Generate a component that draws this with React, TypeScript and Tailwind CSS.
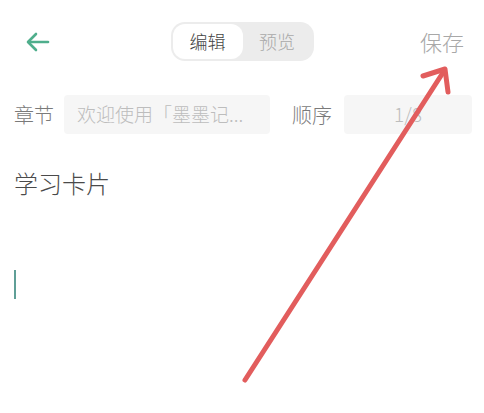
import React from "react";

export default function App() {
  const font = { fontFamily: '"Noto Sans CJK SC", "Noto Sans", sans-serif' };
  return (
    <div className="relative w-[484px] h-[413px] bg-white overflow-hidden font-light" style={font}>
      {/* Header */}
      <div className="grid grid-cols-[1fr_auto_1fr] items-center h-[83px]">
        <div className="pl-[25px] flex items-center">
          <svg width="26" height="24" viewBox="0 0 26 24" fill="none" stroke="#4fae8c" strokeWidth="2.6" strokeLinecap="round" strokeLinejoin="round">
            <path d="M23 12H4" />
            <path d="M11 4L3 12L11 20" />
          </svg>
        </div>
        <div className="flex items-center w-[143px] h-[39px] rounded-[14px] bg-[#ececec] p-[2px]">
          <div className="w-[70px] h-[35px] rounded-[12px] bg-white flex items-center justify-center text-[18px] text-[#444444]">
            编辑
          </div>
          <div className="flex-1 flex items-center justify-center text-[18px] text-[#a9a9a9]">
            预览
          </div>
        </div>
        <div className="flex justify-end pr-[20px] text-[22px] text-[#a8a8a8]">保存</div>
      </div>

      {/* Fields row */}
      <div className="flex items-center mt-[12px] pl-[14px] pr-[12px]">
        <span className="text-[20px] text-[#7a7a7a] leading-none">章节</span>
        <div className="ml-[10px] w-[206px] h-[39px] bg-[#f6f6f6] rounded-[4px] flex items-center pl-[13px] text-[19px] text-[#bdbdbd] whitespace-nowrap overflow-hidden">
          欢迎使用「墨墨记...
        </div>
        <span className="ml-[22px] text-[20px] text-[#7a7a7a] leading-none">顺序</span>
        <div className="ml-[12px] flex-1 h-[39px] bg-[#f6f6f6] rounded-[4px] flex items-center justify-center text-[19px] text-[#bdbdbd]">
          1/8
        </div>
      </div>

      {/* Title */}
      <div className="pl-[14px] mt-[37px] text-[24px] text-[#4a4a4a] leading-none">学习卡片</div>

      {/* Cursor */}
      <div className="ml-[14px] mt-[75px] w-[2px] h-[29px] bg-[#5f9f97]" />

      {/* Red annotation arrow */}
      <svg className="absolute inset-0 pointer-events-none" width="484" height="413" viewBox="0 0 484 413" fill="none">
        <g stroke="#e25d5d" strokeWidth="5" strokeLinecap="round" strokeLinejoin="round">
          <path d="M245 380L444 71" />
          <path d="M423 76L445 69L448 92" />
        </g>
      </svg>
    </div>
  );
}
